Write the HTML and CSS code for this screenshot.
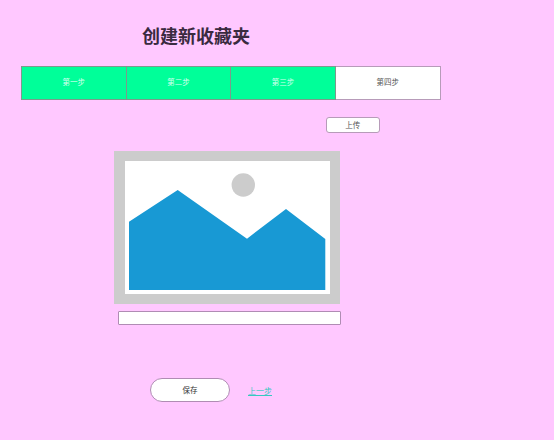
FILE: index.html
```html
<!DOCTYPE html>
<html lang="zh-CN">
<head>
	<meta charset="UTF-8">
	<title>创建新收藏夹</title>
	<link rel="stylesheet" href="styles.css">
</head>
<body>
	<h1 class="title">创建新收藏夹</h1>
	<div class="steps">
		<div class="step done">第一步</div>
		<div class="step done">第二步</div>
		<div class="step done">第三步</div>
		<div class="step">第四步</div>
	</div>
	<div class="upload_row">
		<button class="upload" type="button">上传</button>
	</div>
	<svg class="preview" width="226" height="153" viewBox="0 0 226 153">
		<rect width="226" height="153" fill="#cccccc"/>
		<rect x="11" y="10" width="205" height="133" fill="#ffffff"/>
		<circle cx="129.3" cy="34" r="11.7" fill="#cccccc"/>
		<path d="M15 70.7L63.7 39L133 87.7L172 58L211.3 88V139H15Z" fill="#1899d4"/>
	</svg>
	<input class="name" type="text">
	<div class="actions">
		<button class="save" type="button">保存</button>
		<a class="prev" href="#">上一步</a>
	</div>
</body>
</html>
```
FILE: styles.css
```css
*{box-sizing: border-box;}
html,body{margin: 0;padding: 0;}
body{width: 554px;height: 440px;overflow: hidden;padding: 25px 0 0 21px;background: #ffc8ff;font-family: "Noto Sans CJK SC",sans-serif;color: #333;}
.title{margin: 0 0 0 121px;font-size: 18px;line-height: 20px;font-weight: bold;color: #3a2a40;}
.steps{display: flex;width: 419.5px;height: 33.5px;margin-top: 21px;}
.step{flex: 1;display: flex;align-items: center;justify-content: center;padding-bottom: 2px;font-size: 7.5px;color: #555;background: #fff;border: 1px solid #b79bb9;border-left: 0;}
.step.done{background: #00ff99;color: #d8fff0;border-color: #7d9a8c;}
.step:first-child{border-left: 1px solid #7d9a8c;}
.upload_row{margin: 17.5px 0 0 305px;height: 16px;}
.upload{display: block;width: 53.5px;height: 16px;padding: 0 0 2px;font-size: 7.5px;font-family: inherit;color: #555;background: #fff;border: 1px solid #b79bb9;border-radius: 3px;}
.preview{display: block;margin: 18px 0 0 93px;}
.name{display: block;width: 223px;height: 14px;margin: 7px 0 0 97px;padding: 0;background: #fff;border: 1px solid #b08cb4;border-radius: 1px;outline: none;}
.actions{display: flex;align-items: center;margin: 53px 0 0 129px;}
.save{width: 80px;height: 24px;padding: 0 0 1px;font-size: 7.5px;font-family: inherit;color: #333;background: #fff;border: 1px solid #b08cb4;border-radius: 12px;}
.prev{margin-left: 18px;font-size: 8px;color: #35c9c0;text-decoration: underline;}
```
